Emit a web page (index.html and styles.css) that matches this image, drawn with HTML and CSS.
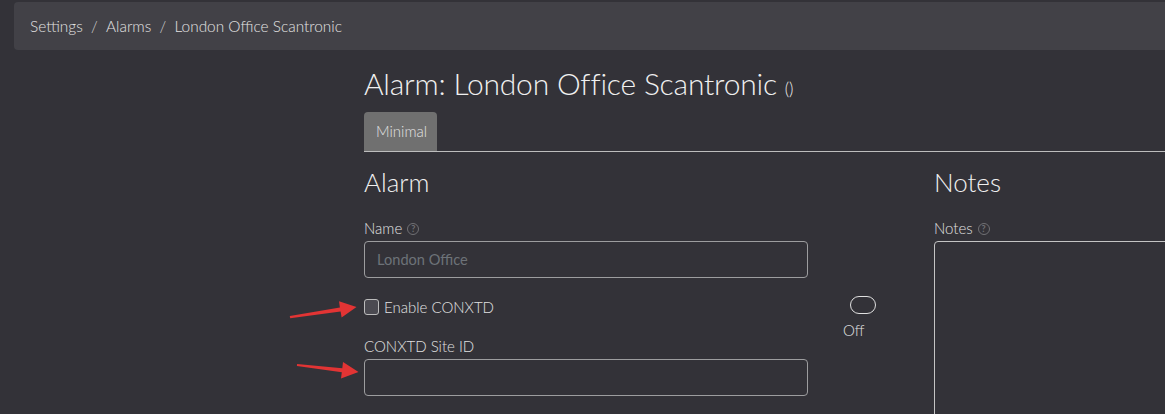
FILE: index.html
```html
<!DOCTYPE html>
<html lang="en">
<head>
<meta charset="utf-8">
<title>Alarm: London Office Scantronic</title>
<link rel="stylesheet" href="styles.css">
</head>
<body>
<div class="page">
  <nav class="crumbs">
    <span>Settings</span><span class="sep">/</span><span>Alarms</span><span class="sep">/</span><span>London Office Scantronic</span>
  </nav>
  <main class="main">
    <h1 class="title">Alarm: London Office Scantronic <small class="paren">()</small></h1>
    <div class="tabs"><span class="tab">Minimal</span></div>
    <div class="grid">
      <section class="col-alarm">
        <h2 class="section-title">Alarm</h2>
        <label class="label">Name <span class="help">?</span></label>
        <input class="field" type="text" placeholder="London Office">
        <div class="check-row"><span class="checkbox"></span><span class="check-text">Enable CONXTD</span></div>
        <label class="label">CONXTD Site ID</label>
        <input class="field" type="text">
      </section>
      <div class="toggle-col">
        <span class="toggle"></span>
        <span class="toggle-text">Off</span>
      </div>
      <section class="col-notes">
        <h2 class="section-title">Notes</h2>
        <label class="label">Notes <span class="help">?</span></label>
        <textarea class="notes"></textarea>
      </section>
    </div>
  </main>
  <svg class="arrows" width="1165" height="414" viewBox="0 0 1165 414">
    <polygon fill="#e23434" points="289.8,316.1 339.9,307.4 339.0,301.3 356.5,307 341.6,317.6 340.6,311.5 290.2,318.3"/>
    <polygon fill="#e23434" points="297.1,363.9 342.3,368.2 343.0,362.0 358.5,372 341.0,378.4 341.8,372.3 296.9,366.1"/>
  </svg>
</div>
</body>
</html>
```
FILE: styles.css
```css
html, body {
  margin: 0;
  padding: 0;
  overflow: hidden;
  background: #333238;
}
body {
  font-family: "Lato", "Noto Sans", sans-serif;
  color: #e4e4e4;
  width: 1165px;
  height: 414px;
}
.page {
  position: relative;
  width: 1165px;
  height: 414px;
  overflow: hidden;
}
.crumbs {
  margin: 2px -20px 0 14px;
  height: 48px;
  background: #424147;
  border-radius: 4px;
  display: flex;
  align-items: center;
  padding-left: 16px;
  font-size: 15.4px;
  color: #e2e2e2;
  gap: 8.3px;
  font-weight: 300;
}
.crumbs .sep { color: #cfcfcf; }
.main {
  padding-left: 364px;
}
.title {
  margin: 15px 0 0;
  font-size: 30px;
  line-height: 36px;
  font-weight: 300;
  color: #f0f0f0;
  letter-spacing: -0.2px;
}
.paren {
  font-size: 17px;
}
.tabs {
  margin-top: 5px;
  border-bottom: 1px solid #bdbdbd;
  display: flex;
}
.tab {
  background: #707070;
  width: 73px;
  height: 39px;
  box-sizing: border-box;
  padding-left: 12px;
  border-radius: 4px 4px 0 0;
  font-size: 15px;
  line-height: 39px;
  color: #e2e2e2;
  font-weight: 300;
}
.grid {
  display: grid;
  grid-template-columns: 444px 126px 320px;
}
.section-title {
  margin: 14px 0 0;
  font-size: 26px;
  line-height: 32px;
  font-weight: 300;
  color: #f0f0f0;
}
.label {
  display: flex;
  align-items: center;
  gap: 5px;
  font-size: 15px;
  line-height: 18px;
  color: #e0e0e0;
  font-weight: 300;
}
.section-title + .label {
  margin-top: 21px;
}
.help {
  display: inline-flex;
  align-items: center;
  justify-content: center;
  width: 12px;
  height: 12px;
  box-sizing: border-box;
  border: 1px solid #707074;
  border-radius: 50%;
  color: #707074;
  font-size: 9px;
  line-height: 1;
  font-weight: 700;
  margin-top: 1px;
}
.field {
  display: block;
  box-sizing: border-box;
  width: 444px;
  height: 37px;
  margin: 4px 0 0;
  border: 1px solid #9d9d9f;
  border-radius: 4px;
  background: transparent;
  padding: 0 12px;
  font-family: "Lato", sans-serif;
  font-size: 14.6px;
  color: #e0e0e0;
  outline: none;
}
.field::placeholder {
  color: #6d7278;
}
.check-row {
  margin-top: 19px;
  height: 20px;
  display: flex;
  align-items: center;
  gap: 5px;
}
.check-row + .label {
  margin-top: 20px;
}
.checkbox {
  width: 15px;
  height: 16px;
  box-sizing: border-box;
  border: 1px solid #bcbcbc;
  border-radius: 3px;
  background: #4b4a51;
}
.check-text {
  font-size: 15px;
  color: #e2e2e2;
  font-weight: 300;
}
.toggle-col {
  padding-top: 144px;
  padding-left: 35px;
  display: flex;
  flex-direction: column;
  align-items: flex-start;
}
.toggle {
  margin-left: 7px;
  width: 26px;
  height: 18px;
  box-sizing: border-box;
  border: 1px solid #e0e0e0;
  border-radius: 9px;
}
.toggle-text {
  margin-top: 7px;
  font-size: 15px;
  line-height: 18px;
  color: #e0e0e0;
  font-weight: 300;
}
.notes {
  display: block;
  box-sizing: border-box;
  width: 320px;
  height: 220px;
  margin-top: 4px;
  border: 1px solid #c4c4c4;
  border-radius: 4px;
  background: transparent;
  resize: none;
  outline: none;
}
.arrows {
  position: absolute;
  left: 0;
  top: 0;
  pointer-events: none;
}
```
